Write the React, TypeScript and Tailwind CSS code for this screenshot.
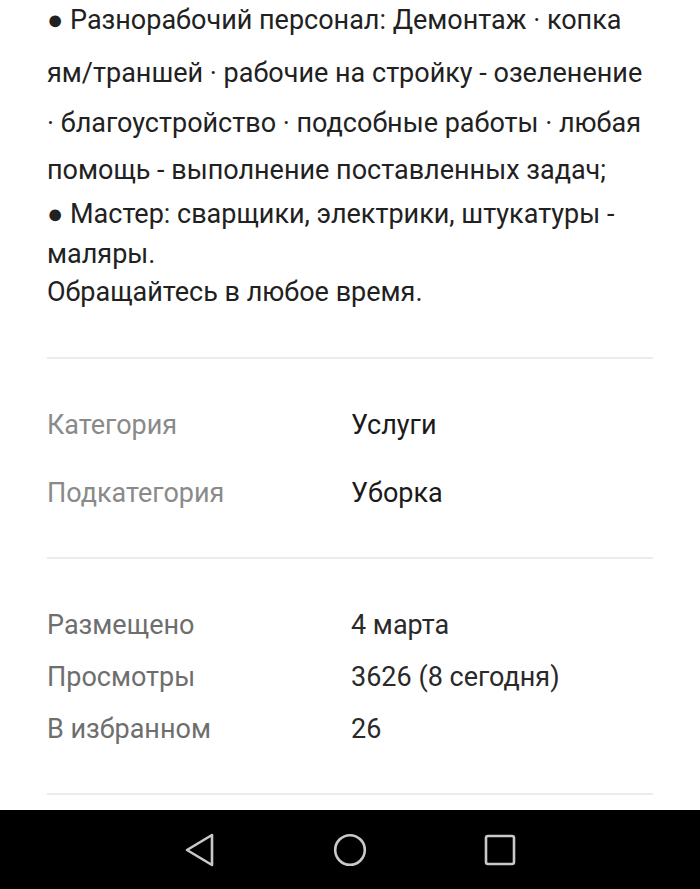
export default function App() {
  const lines = [
    { text: "● Разнорабочий персонал: Демонтаж · копка", h: "h-[53px] leading-[53px]" },
    { text: "ям/траншей · рабочие на стройку - озеленение", h: "h-[52px] leading-[52px]" },
    { text: "· благоустройство · подсобные работы · любая", h: "h-[49px] leading-[49px]" },
    { text: "помощь - выполнение поставленных задач;", h: "h-[45px] leading-[45px]" },
    { text: "● Мастер: сварщики, электрики, штукатуры -", h: "h-[42px] leading-[42px]" },
    { text: "маляры.", h: "h-[38px] leading-[38px]" },
    { text: "Обращайтесь в любое время.", h: "h-[38px] leading-[38px]" },
  ];

  return (
    <div className="h-[889px] flex flex-col bg-white font-['Roboto',sans-serif] overflow-hidden">
      <div className="flex-1 px-[47px]">
        <div className="-mt-[6px] text-[27px] text-[#212121] whitespace-nowrap">
          {lines.map((l) => (
            <div key={l.text} className={l.h}>
              {l.text}
            </div>
          ))}
        </div>

        <div className="mt-[46px] h-[2px] bg-[#ececec]" />

        <div className="pt-[32px] pb-[30px] text-[27px]">
          <div className="flex h-[68px] items-center">
            <span className="w-[304px] text-[#8a8a8a]">Категория</span>
            <span className="text-[#1a1a1a]">Услуги</span>
          </div>
          <div className="flex h-[68px] items-center">
            <span className="w-[304px] text-[#8a8a8a]">Подкатегория</span>
            <span className="text-[#1a1a1a]">Уборка</span>
          </div>
        </div>

        <div className="h-[2px] bg-[#ececec]" />

        <div className="pt-[40px] pb-[38px] text-[27px]">
          <div className="flex h-[52px] items-center">
            <span className="w-[304px] text-[#6e6e6e]">Размещено</span>
            <span className="text-[#2a2a2a]">4 марта</span>
          </div>
          <div className="flex h-[52px] items-center">
            <span className="w-[304px] text-[#6e6e6e]">Просмотры</span>
            <span className="text-[#2a2a2a]">3626 (8 сегодня)</span>
          </div>
          <div className="flex h-[52px] items-center">
            <span className="w-[304px] text-[#6e6e6e]">В избранном</span>
            <span className="text-[#2a2a2a]">26</span>
          </div>
        </div>

        <div className="h-[2px] bg-[#ececec]" />
      </div>

      <div className="h-[79px] bg-black flex items-center justify-center">
        <div className="w-[150px] flex justify-center">
          <svg width="34" height="36" viewBox="0 0 34 36" fill="none">
            <path d="M4 18 L29 3 L29 33 Z" stroke="#c9c9c9" strokeWidth="2.6" strokeLinejoin="round" />
          </svg>
        </div>
        <div className="w-[150px] flex justify-center">
          <svg width="34" height="34" viewBox="0 0 34 34" fill="none">
            <circle cx="17" cy="17" r="14.8" stroke="#c9c9c9" strokeWidth="2.6" />
          </svg>
        </div>
        <div className="w-[150px] flex justify-center">
          <svg width="34" height="34" viewBox="0 0 34 34" fill="none">
            <rect x="3" y="3" width="28" height="28" rx="2" stroke="#c9c9c9" strokeWidth="2.6" />
          </svg>
        </div>
      </div>
    </div>
  );
}
